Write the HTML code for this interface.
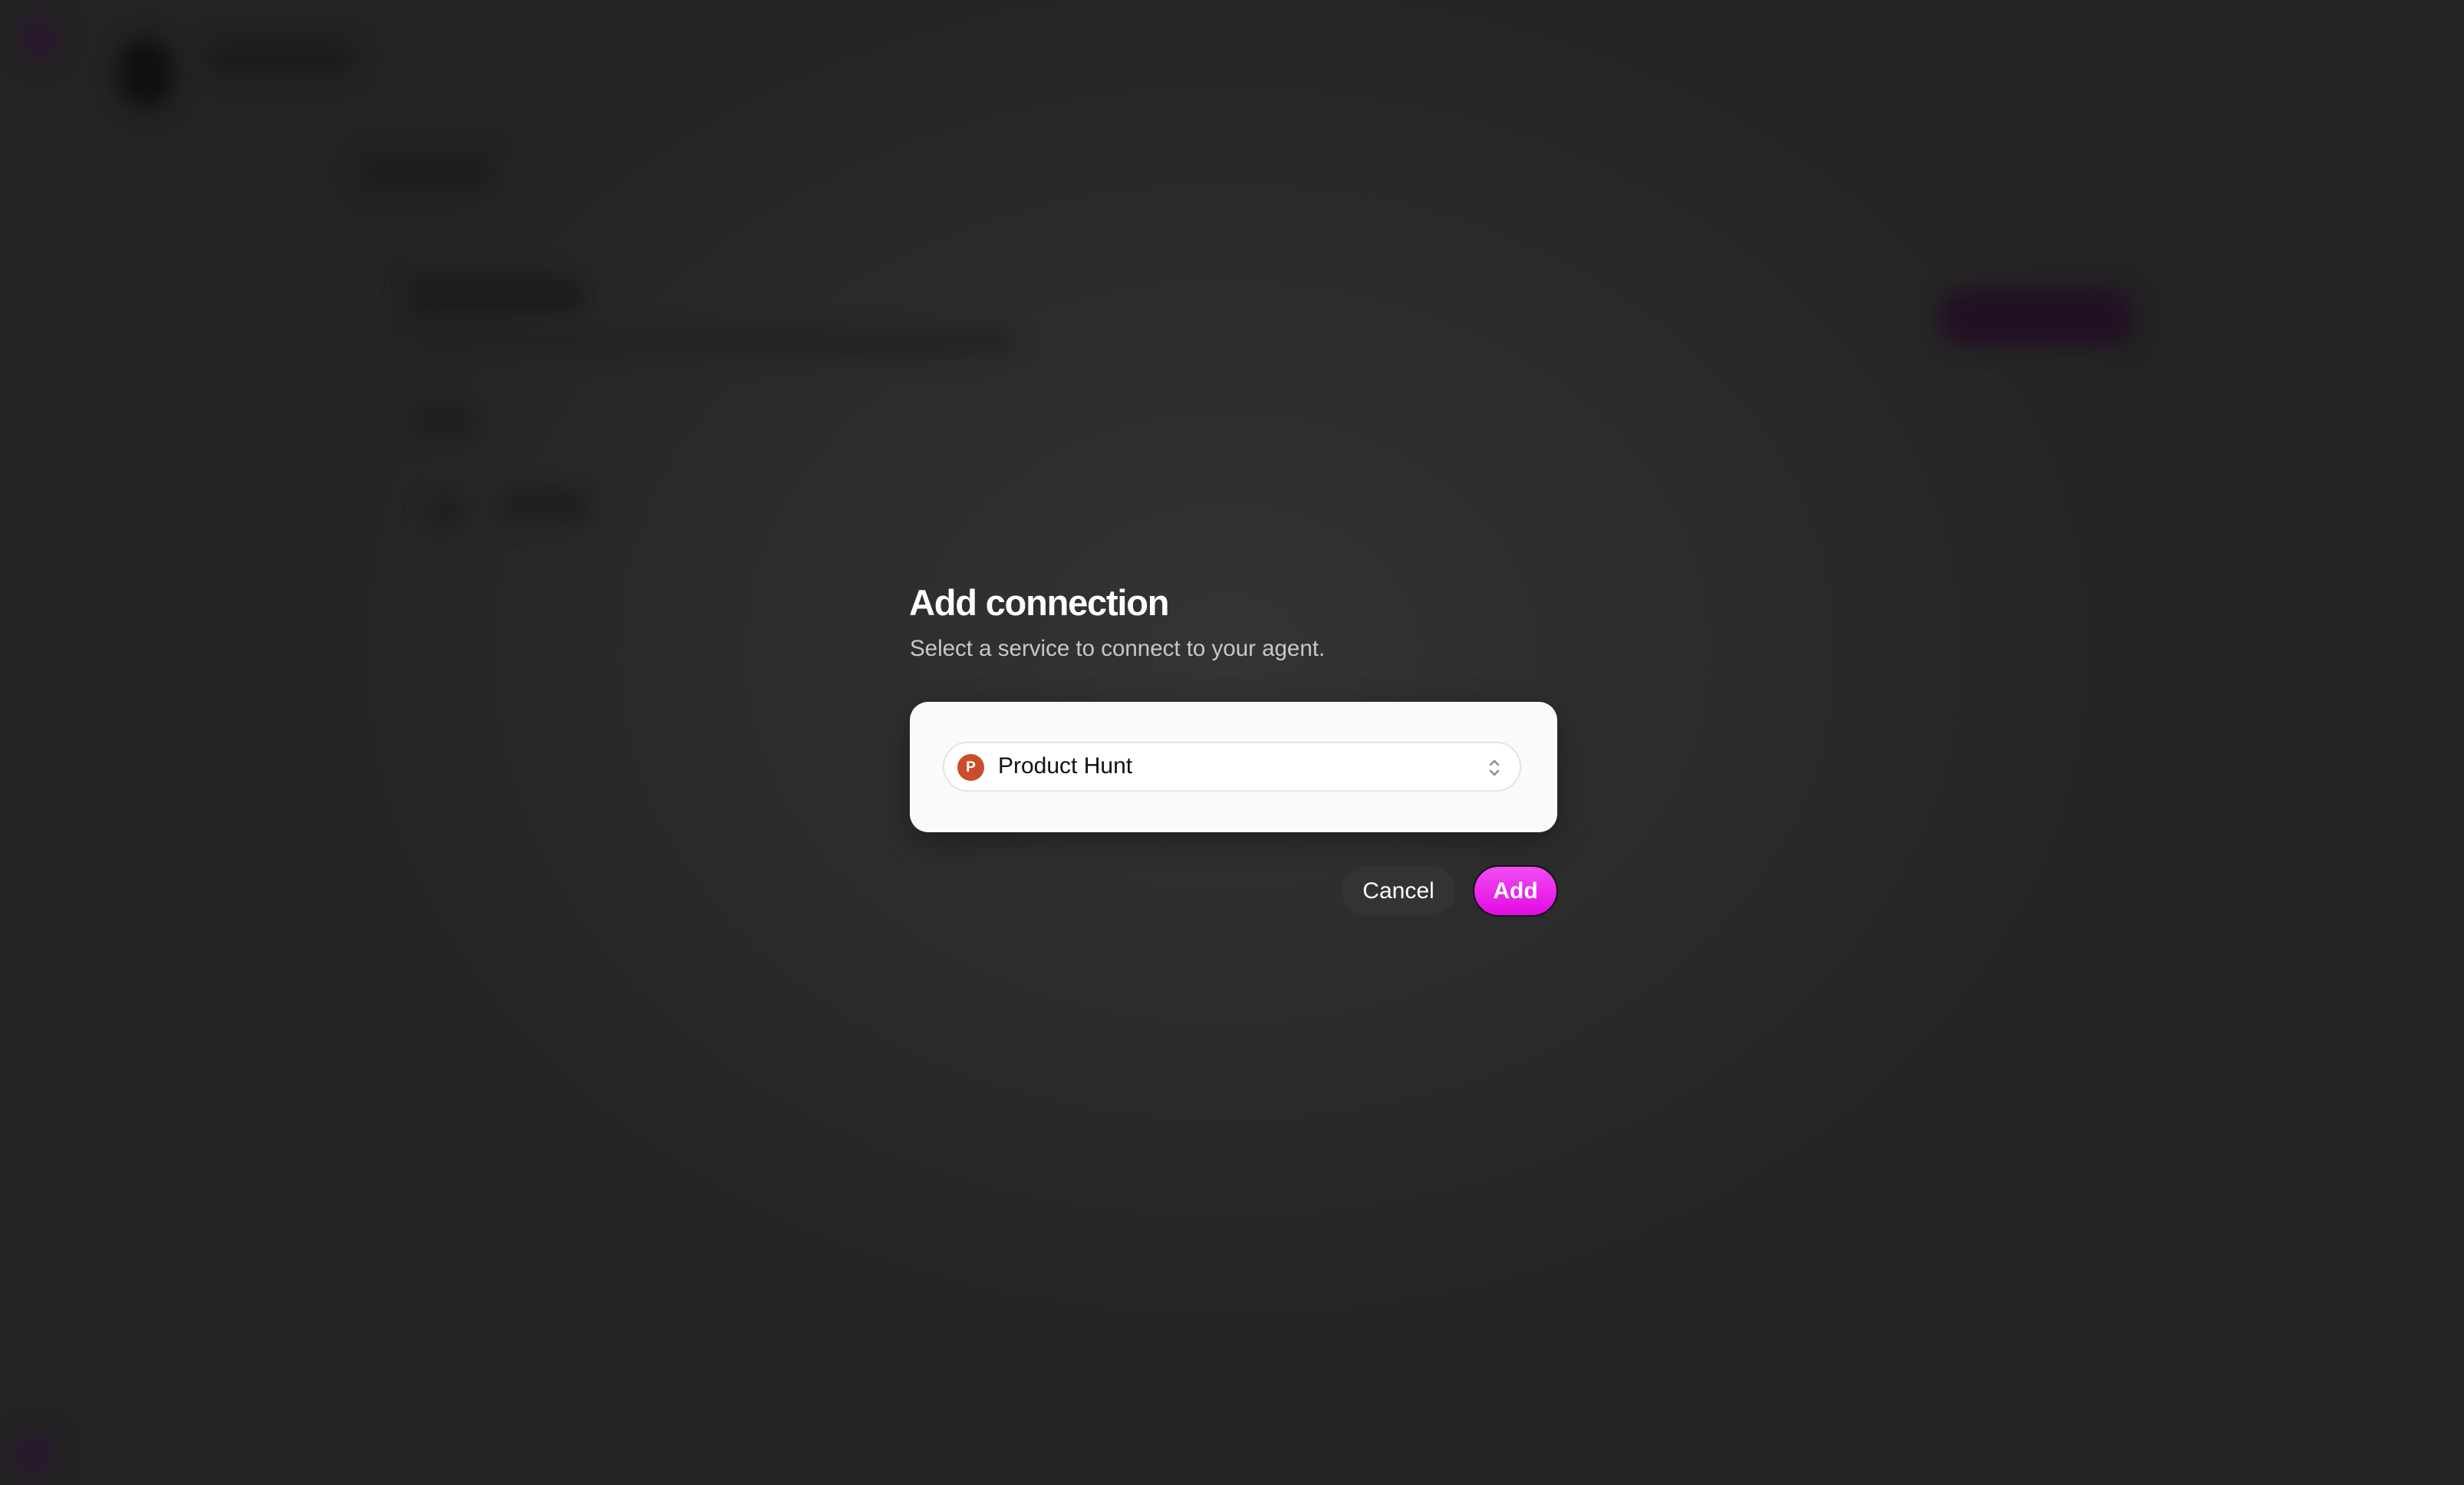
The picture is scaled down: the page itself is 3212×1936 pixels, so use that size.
<!DOCTYPE html>
<html><head><meta charset="utf-8">
<style>
html,body{margin:0;padding:0;}
body{width:3212px;height:1936px;position:relative;overflow:hidden;font-family:"Liberation Sans",sans-serif;
background:radial-gradient(ellipse 1300px 1000px at 1600px 850px,#343434 0%,#2c2c2c 45%,#232323 100%);}
.b{position:absolute;filter:blur(14px);}
.t{position:absolute;white-space:nowrap;}
</style></head><body>
<div class="b" style="left:26px;top:24px;width:50px;height:50px;border-radius:12px;background:#2a1730"></div>
<div class="b" style="left:155px;top:50px;width:70px;height:90px;border-radius:40px;background:#0f0f0f"></div>
<div class="b" style="left:270px;top:55px;width:190px;height:40px;border-radius:14px;background:#1b1b1b"></div>
<div class="b" style="left:470px;top:200px;width:170px;height:48px;border-radius:14px;background:#1d1d1d"></div>
<div class="b" style="left:530px;top:360px;width:230px;height:50px;border-radius:14px;background:#1c1c1c"></div>
<div class="b" style="left:540px;top:430px;width:780px;height:30px;border-radius:14px;background:#222"></div>
<div class="b" style="left:540px;top:530px;width:80px;height:40px;border-radius:14px;background:#1e1e1e"></div>
<div class="b" style="left:555px;top:640px;width:50px;height:50px;border-radius:25px;background:#1e1f21"></div>
<div class="b" style="left:650px;top:640px;width:120px;height:40px;border-radius:14px;background:#1e1e1e"></div>
<div class="b" style="left:2526px;top:377px;width:257px;height:73px;border-radius:36px;background:#220f24"></div>
<div class="b" style="left:20px;top:1870px;width:50px;height:50px;border-radius:12px;background:#2a1730"></div>

<div class="t" style="left:1185px;top:758px;font-size:47px;font-weight:bold;color:#fff;letter-spacing:-1.2px">Add connection</div>
<div class="t" style="left:1186px;top:829px;font-size:29.5px;color:#c8c8c8">Select a service to connect to your agent.</div>

<div style="position:absolute;left:1186px;top:915px;width:844px;height:170px;border-radius:24px;background:#fafafa;box-shadow:0 10px 40px rgba(0,0,0,0.35)">
  <div style="position:absolute;left:43px;top:52px;width:754px;height:65px;border-radius:33px;background:#fff;border:2px solid #e3e3e3;box-sizing:border-box">
    <div style="position:absolute;left:17px;top:14px;width:35px;height:35px;border-radius:50%;background:#cc4d29;color:#fff;font-size:19px;font-weight:bold;text-align:center;line-height:35px">P</div>
    <div class="t" style="left:70px;top:13px;font-size:30px;color:#111">Product Hunt</div>
    <svg style="position:absolute;left:708px;top:18px" width="18" height="28" viewBox="0 0 18 28"><path d="M4 10 L9 5 L14 10 M4 18 L9 23 L14 18" fill="none" stroke="#8a8a8a" stroke-width="2.4" stroke-linecap="round" stroke-linejoin="round"/></svg>
  </div>
</div>

<div style="position:absolute;left:1749px;top:1129px;width:148px;height:65px;border-radius:33px;background:#333;color:#fff;font-size:30px;text-align:center;line-height:65px">Cancel</div>
<div style="position:absolute;left:1920px;top:1128px;width:111px;height:67px;border-radius:34px;background:linear-gradient(#f24cf2,#e20be2);border:2px solid #111;box-sizing:border-box;color:#fff;font-size:30px;font-weight:bold;text-align:center;line-height:63px">Add</div>
</body></html>
